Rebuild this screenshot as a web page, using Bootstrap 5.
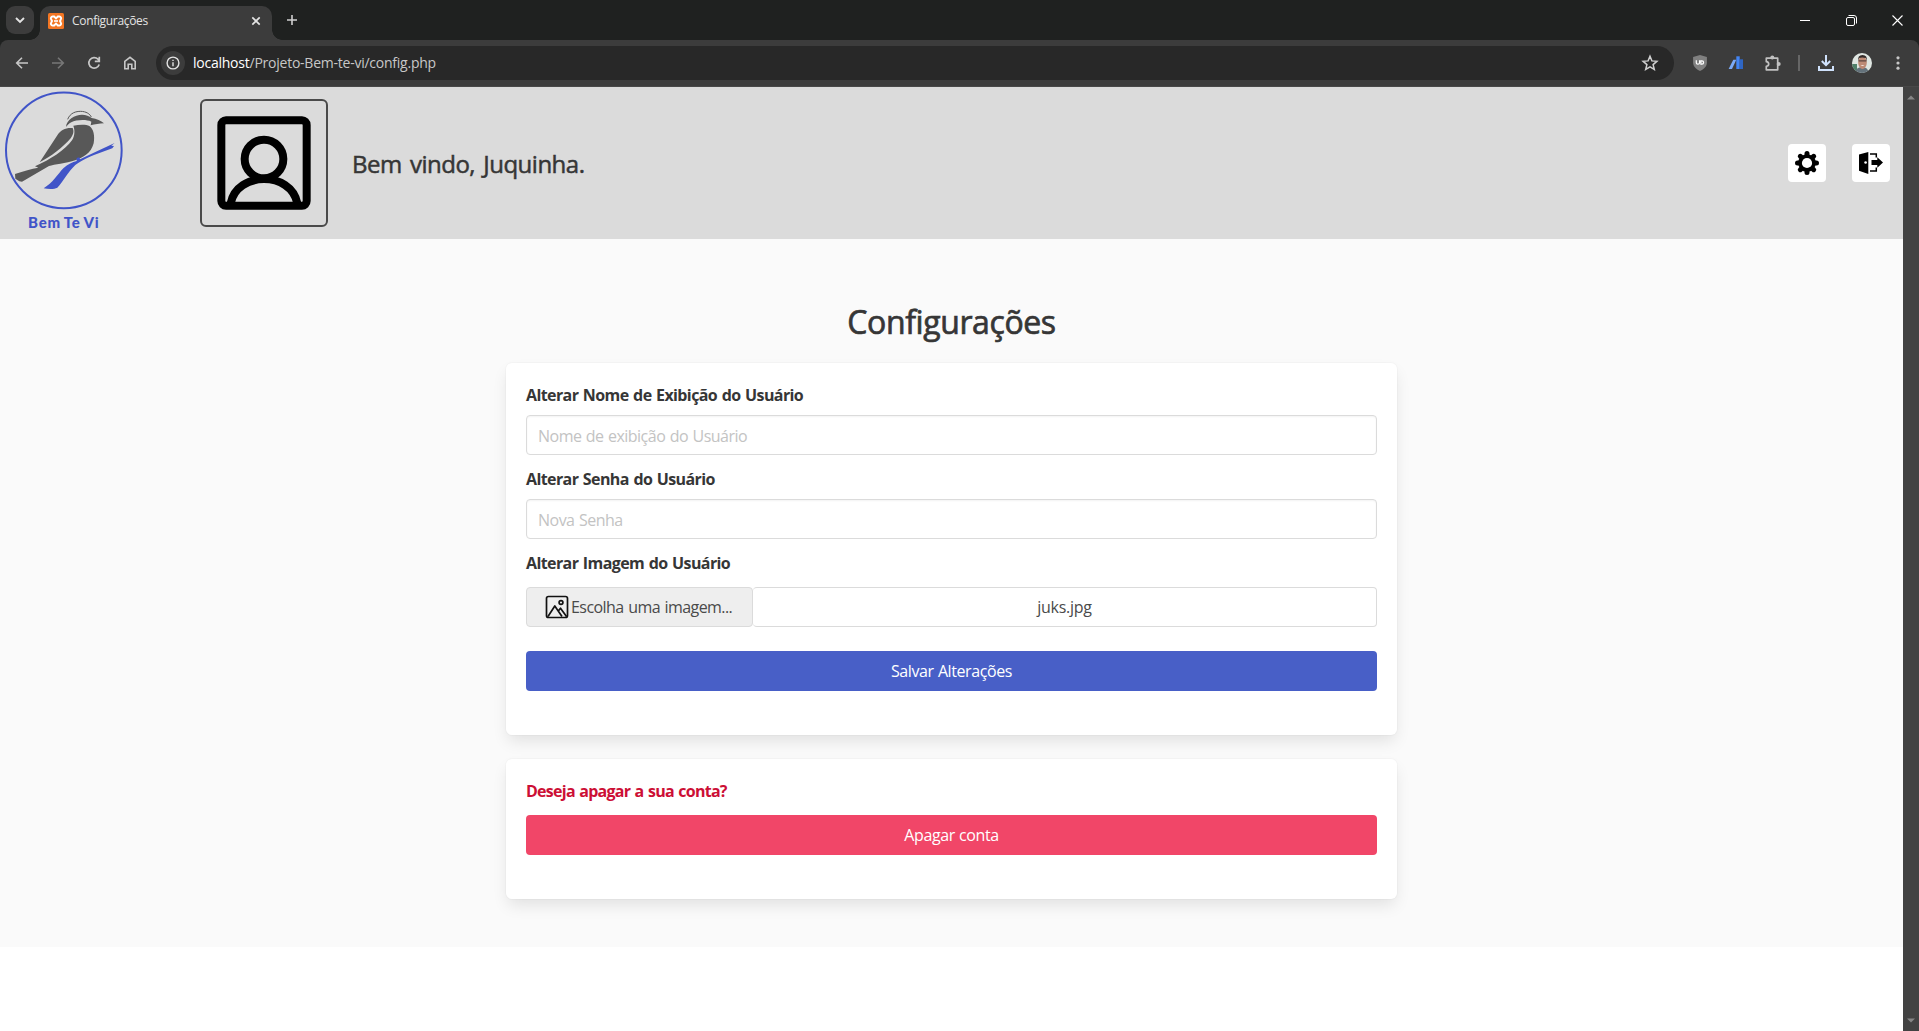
<!DOCTYPE html>
<html lang="pt-br">
<head>
<meta charset="utf-8">
<meta name="viewport" content="width=device-width, initial-scale=1">
<title>Configurações</title>
<link href="https://cdn.jsdelivr.net/npm/bootstrap@5.3.0/dist/css/bootstrap.min.css" rel="stylesheet">
<style>
body{font-family:"Open Sans","Noto Sans",sans-serif;font-size:16px;line-height:24px;color:#363636;letter-spacing:-.4px;background:#fff}
svg{display:block;flex:none}
/* browser window */
.tabstrip{height:40px;background:#1f2120;flex:none}
.tab-menu{width:28px;height:28px;border-radius:9px;background:#3c3c3c;margin:6px 6px 6px 6px}
.tab-active{width:232px;height:34px;margin-top:6px;border-radius:10px 10px 0 0;background:#3c3c3c;font-size:12px;letter-spacing:-.32px;color:#e3e3e3;padding:0 9px 5px 8px}
.tab-active::before,.tab-active::after{content:"";position:absolute;bottom:0;width:10px;height:10px}
.tab-active::before{left:-10px;background:radial-gradient(circle at 0 0,transparent 9.5px,#3c3c3c 10px)}
.tab-active::after{right:-10px;background:radial-gradient(circle at 100% 0,transparent 9.5px,#3c3c3c 10px)}
.new-tab{margin:15px 0 0 15px}
.win-buttons{margin-right:-1px}
.win-btn{width:46px;height:40px}
.toolbar-wrap{background:#1f2120;flex:none}
.toolbar{height:47px;background:#3c3c3c;border-radius:8px 8px 0 0;border-bottom:1px solid #484848;padding:0 3px 0 4px}
.tool{width:36px;height:36px}
.omnibox{height:34px;border-radius:17px;background:#282828;margin:0 8px;padding:0 14px 0 5px;font-size:14px;letter-spacing:-.24px;color:#c7c7c7}
.omnibox .host{color:#fff}
.site-info{width:24px;height:24px;border-radius:50%;background:#3c3c3c;margin-right:8px}
.scroll-rail{width:16px;background:#424242;flex:none}
/* page */
.topo{height:152px;background:#dbdbdb;padding-right:13px}
.foto{width:128px;height:128px;border:2px solid #4a4a4a;border-radius:6px;margin:12px 24px 0 68px}
.saudacao{font-size:24px;font-weight:400;-webkit-text-stroke:.5px #363636;line-height:36px;letter-spacing:-.5px;word-spacing:2.500px;margin-top:1px}
.icones{gap:26px}
.icone-btn{width:38px;height:38px;background:#fff;border-radius:4px}
.secao{background:#fafafa;height:708px;padding-top:63px}
.titulo{font-size:32px;font-weight:400;-webkit-text-stroke:.7px #363636;line-height:40px;letter-spacing:-.4px;margin:0 0 21px}
.caixa{width:891px;background:#fff;border-radius:6px;padding:20px 20px 44px;box-shadow:0 8px 16px -2px rgba(10,10,10,.1),0 0 0 1px rgba(10,10,10,.02)}
.rotulo{font-weight:700;letter-spacing:-.6px;word-spacing:1px;margin-bottom:8px;line-height:24px}
.campo{height:40px;border:1px solid #dbdbdb;border-radius:4px;padding:2px 11px 0;font-size:16px;letter-spacing:-.52px;word-spacing:.8px;box-shadow:inset 0 1px 2px rgba(10,10,10,.05)}
.campo::placeholder{color:#c3c3c3}
.arquivo{height:40px;margin:12px 0 24px}
.arquivo-cta{width:227px;background:#eee;border:1px solid #dbdbdb;border-radius:4px;letter-spacing:-.57px;word-spacing:1px;color:#4a4a4a;padding-left:18px;gap:2px}
.arquivo-nome{border:1px solid #dbdbdb;border-left:0;border-radius:4px;color:#4a4a4a;letter-spacing:-.25px}
.acao{height:40px;border-radius:4px;font-size:16px;padding:0;letter-spacing:-.41px;word-spacing:.5px;color:#fff;border:0}
.acao-salvar{background:#485fc7}
.acao-apagar{background:#f14668}
.aviso{color:#cc0f35;letter-spacing:-.74px;margin-bottom:12px}
</style>
<script src="https://cdn.jsdelivr.net/npm/bootstrap@5.3.0/dist/js/bootstrap.bundle.min.js"></script>
</head>
<body class="vh-100 d-flex flex-column overflow-hidden">

<div class="tabstrip d-flex">
  <div class="tab-menu d-flex align-items-center justify-content-center">
    <svg width="10" height="7" fill="none" stroke="#e3e3e3" stroke-width="1.9"><path d="M1 1l4 4 4-4"/></svg>
  </div>
  <div class="tab-active position-relative d-flex align-items-center">
    <svg width="16" height="16" viewBox="0 0 16 16"><rect width="16" height="16" rx="1.5" fill="#f37623"/><path d="M4.600 3.500H6.200L8 5.300l1.800-1.800h1.600a1.800 1.800 0 0 1 1.300 3L12 8l.7 1.500a1.800 1.800 0 0 1-1.300 3H9.800L8 10.700l-1.800 1.800H4.600a1.800 1.800 0 0 1-1.300-3L4 8l-.7-1.500a1.800 1.800 0 0 1 1.300-3z" fill="#f37623" stroke="#fff" stroke-width="1.900"/><path d="M6 8h4" stroke="#fff" stroke-width="1.600"/></svg>
    <span class="ms-2 flex-fill">Configurações</span>
    <svg width="14" height="10" viewBox="0 0 14 10" stroke="#e3e3e3" stroke-width="1.700"><path d="M3.300 1.300l7.400 7.400M10.700 1.300L3.300 8.700"/></svg>
  </div>
  <svg class="new-tab" width="10" height="10" stroke="#d0d0d0" stroke-width="1.600"><path d="M5 0v10M0 5h10"/></svg>
  <div class="win-buttons ms-auto d-flex">
    <div class="win-btn d-flex align-items-center justify-content-center"><svg width="10" height="10"><path d="M0 5.500h10" stroke="#fff"/></svg></div>
    <div class="win-btn d-flex align-items-center justify-content-center"><svg width="11" height="11" fill="none" stroke="#fff"><rect x=".5" y="2.500" width="8" height="8" rx="1.500"/><path d="M2.500.5H8a2.500 2.500 0 0 1 2.500 2.500v5.500"/></svg></div>
    <div class="win-btn d-flex align-items-center justify-content-center"><svg width="11" height="11" stroke="#fff" stroke-width="1.100"><path d="M.5.5l10 10M10.500.5l-10 10"/></svg></div>
  </div>
</div>

<div class="toolbar-wrap">
  <div class="toolbar d-flex align-items-center">
    <div class="tool d-flex align-items-center justify-content-center"><svg width="14" height="14" fill="none" stroke="#c7c7c7" stroke-width="1.600"><path d="M13 7H2M7 1.700L1.700 7 7 12.300"/></svg></div>
    <div class="tool d-flex align-items-center justify-content-center"><svg width="14" height="14" fill="none" stroke="#777" stroke-width="1.600"><path d="M1 7h11M7 1.700L12.300 7 7 12.300"/></svg></div>
    <div class="tool d-flex align-items-center justify-content-center"><svg width="14" height="14" fill="none" stroke="#c7c7c7" stroke-width="1.700"><path d="M12.200 8.500A5.300 5.300 0 1 1 11 3.200L12.300 4.800M12.300.8v4.500H7.800"/></svg></div>
    <div class="tool d-flex align-items-center justify-content-center"><svg width="14" height="14" fill="none" stroke="#c7c7c7" stroke-width="1.600"><path d="M1.800 5.300L7 1.300l5.200 4v7.500H8.800V8.300H5.200v4.500H1.800z"/></svg></div>
    <div class="omnibox d-flex align-items-center flex-fill">
      <div class="site-info d-flex align-items-center justify-content-center"><svg width="14" height="14" fill="none" stroke="#e3e3e3" stroke-width="1.400"><circle cx="7" cy="7" r="5.900"/><path d="M7 6.300v4M7 3.700v1.400"/></svg></div>
      <span class="flex-fill"><span class="host">localhost</span>/Projeto-Bem-te-vi/config.php</span>
      <svg width="20" height="18" viewBox="0 0 20 18"><path d="M10 2.300l1.900 4.600 5 .4-3.800 3.300 1.200 4.800L10 12.800l-4.300 2.600 1.200-4.800-3.800-3.300 5-.4z" fill="none" stroke="#d0d0d0" stroke-width="1.500"/></svg>
    </div>
    <div class="tool d-flex align-items-center justify-content-center">
      <svg width="16" height="16" viewBox="0 0 16 16"><path d="M8 0l6.900 2v5.500c0 4-3 6.500-6.900 8.500-3.900-2-6.900-4.500-6.900-8.500V2z" fill="#808080"/><path d="M4.300 5.200v2.500q0 1.500 1.600 1.500t1.700-1.500V5.200M8.900 5.800v3.400h1a1.700 1.700 0 0 0 0-3.400z" fill="none" stroke="#fff" stroke-width="1.200"/></svg>
    </div>
    <div class="tool d-flex align-items-center justify-content-center">
      <svg width="16" height="14" viewBox="0 0 16 14"><path d="M5.300 3.700h3L4 13H.6z" fill="#7baaf7"/><path d="M8.300.3h3.400V13H8.300z" fill="#4285f4"/><path d="M11.700 3.300H15V13h-3.300z" fill="#2f66c4"/></svg>
    </div>
    <div class="tool d-flex align-items-center justify-content-center">
      <svg width="17" height="17" viewBox="0 0 17 17"><path d="M2.300 3.200H13.700V14.800H2.300V11.300Q4.700 11 4.700 9T2.300 6.700z" fill="none" stroke="#c0c0c0" stroke-width="1.700" stroke-linejoin="round"/><circle cx="8.300" cy="2.600" r="2" fill="#c0c0c0"/><circle cx="14.700" cy="9" r="2" fill="#c0c0c0"/></svg>
    </div>
    <div class="d-flex justify-content-center" style="width:18px"><svg width="2" height="16"><path d="M1 0v16" stroke="#666" stroke-width="2"/></svg></div>
    <div class="tool d-flex align-items-center justify-content-center"><svg width="16" height="16" fill="none" stroke="#cfe1fb" stroke-width="2"><path d="M8 0v10M3.800 6L8 10.200 12.200 6M1 11v4h14v-4"/></svg></div>
    <div class="tool d-flex align-items-center justify-content-center">
      <svg width="20" height="20" viewBox="0 0 20 20"><defs><clipPath id="rosto"><circle cx="10" cy="10" r="10"/></clipPath></defs><g clip-path="url(#rosto)"><path d="M0 0h20v20H0z" fill="#dfe6e2"/><path d="M0 11h5v9H0z" fill="#4f8069"/><path d="M3 20q1-6 7-6t7 6z" fill="#64727b"/><ellipse cx="10.500" cy="9.500" rx="4.300" ry="6.500" fill="#bd8a75"/><path d="M6 8q-.5-6 4.500-6T15 8l-1-3q-4-1-7 0z" fill="#332a28"/><path d="M6.500 7.300h8v1.300h-8z" fill="#5d4440"/><path d="M8.500 12q2 1.500 4 0z" fill="#fff"/></g></svg>
    </div>
    <div class="tool d-flex align-items-center justify-content-center"><svg width="4" height="14" fill="#c7c7c7"><circle cx="2" cy="1.800" r="1.600"/><circle cx="2" cy="7" r="1.600"/><circle cx="2" cy="12.200" r="1.600"/></svg></div>
  </div>
</div>

<div class="d-flex flex-fill overflow-hidden">
  <div class="flex-fill">
    <header class="topo d-flex align-items-start">
      <svg width="132" height="152" viewBox="0 9 396 456">
        <circle cx="191.500" cy="199" r="173.500" fill="none" stroke="#4054c8" stroke-width="6"/>
        <g fill="#585858">
          <path d="M198 129C199 108 224 92 246 92 258 92 268 96 275 102 290 104 303 110 312 118 298 119 285 120 272 124L274 113C260 106 228 107 214 115 206 119 202 124 198 129Z"/>
          <path d="M218 132C198 130 182 138 173 152L119 235C150 220 191 188 212 163 221 150 222 141 218 132Z"/>
          <path d="M220 125C238 121 260 121 268 126 281 135 285 156 281 178 273 209 248 221 228 228 195 239 164 241 147 246L66 293 58 292 46 284 45 270C72 262 94 254 115 251L105 247C152 226 194 199 216 169 225 155 225 139 220 125Z"/>
        </g>
        <path d="M203 106C211 86 228 82 242 82 258 82 270 90 274 99" fill="none" stroke="#585858" stroke-width="3"/>
        <path d="M344 177L334 185 342 186 337 193 282 213C257 224 240 232 226 243 204 264 190 292 172 311 163 316 145 315 131 313 158 297 173 271 190 253 204 240 217 235 230 231L230 222 238 220 240 226 286 204Z" fill="#4054c8"/>
        <text x="84" y="433" font-family="Lato,sans-serif" font-weight="900" font-size="45" textLength="212" fill="#4054c8" word-spacing="-3" letter-spacing="0">Bem Te Vi</text>
      </svg>
      <div class="foto d-flex align-items-center justify-content-center">
        <svg width="94" height="94" viewBox="0 0 282 282" fill="none" stroke="#000" stroke-width="24"><rect x="13" y="13" width="256" height="256" rx="14"/><circle cx="141" cy="129" r="58"/><path d="M41 262C60 165 222 165 241 262"/></svg>
      </div>
      <div class="d-flex align-items-center flex-fill h-100"><p class="saudacao mb-0">Bem vindo, Juquinha.</p></div>
      <div class="icones d-flex align-items-center h-100">
        <button class="icone-btn btn border-0 p-0 d-flex align-items-center justify-content-center" aria-label="Configurações">
          <svg width="24" height="24" viewBox="-12 -12 24 24"><g fill="none" stroke="#000" stroke-width="5" stroke-linecap="round"><path d="M0-9.500V9.500M-9.500 0H9.500M-6.700-6.700L6.700 6.700M6.700-6.700L-6.700 6.700"/></g><circle r="8.800"/><circle r="5.100" fill="#fff"/></svg>
        </button>
        <button class="icone-btn btn border-0 p-0 d-flex align-items-center justify-content-center" aria-label="Sair">
          <svg width="24" height="22" viewBox="0 0 24 22"><path d="M0 2.500L9.300 0v22L0 18.800z"/><circle cx="6.600" cy="10.500" r="1.300" fill="#fff"/><path d="M11 2h6.300v3.500M11 19h6.300v-3.500" fill="none" stroke="#000" stroke-width="1.500"/><path d="M12.500 8h5.800V5.300L24 10.600l-5.700 5.100V13h-5.800z"/></svg>
        </button>
      </div>
    </header>

    <main class="secao d-flex flex-column align-items-center">
      <h1 class="titulo">Configurações</h1>
      <form class="caixa mb-4">
        <label class="rotulo d-block">Alterar Nome de Exibição do Usuário</label>
        <input class="form-control campo" type="text" placeholder="Nome de exibição do Usuário">
        <label class="rotulo d-block mt-2 pt-1">Alterar Senha do Usuário</label>
        <input class="form-control campo" type="text" placeholder="Nova Senha">
        <label class="rotulo d-block mt-2 pt-1">Alterar Imagem do Usuário</label>
        <div class="arquivo d-flex">
          <div class="arquivo-cta d-flex align-items-center">
            <svg width="24" height="24" viewBox="0 0 24 24" fill="none" stroke="#111" stroke-width="1.700" stroke-linejoin="round"><rect x="1.500" y="1.500" width="21" height="21" rx="2"/><circle cx="16" cy="7.500" r="1.900"/><path d="M3 21.500L9.800 11 17 21.500M13.300 16L15.500 13.200 21.500 21.500"/></svg>
            <span>Escolha uma imagem...</span>
          </div>
          <div class="arquivo-nome d-flex align-items-center justify-content-center flex-fill">juks.jpg</div>
        </div>
        <button type="button" class="btn acao acao-salvar w-100">Salvar Alterações</button>
      </form>
      <div class="caixa">
        <p class="rotulo aviso">Deseja apagar a sua conta?</p>
        <button type="button" class="btn acao acao-apagar w-100">Apagar conta</button>
      </div>
    </main>
  </div>
  <div class="scroll-rail d-flex flex-column align-items-center justify-content-between py-1">
    <svg class="mt-1" width="8" height="5"><path d="M0 4.500L4 .5l4 4z" fill="#868686"/></svg>
    <svg class="mb-1" width="8" height="5"><path d="M0 .5L4 4.500l4-4z" fill="#868686"/></svg>
  </div>
</div>
</body>
</html>
